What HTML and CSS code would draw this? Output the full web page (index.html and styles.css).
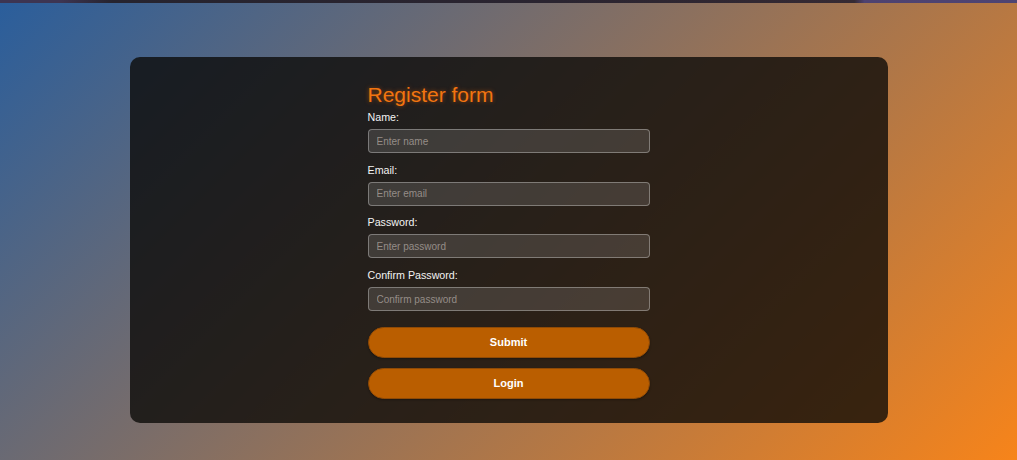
FILE: index.html
```html
<!DOCTYPE html>
<html lang="en">
<head>
<meta charset="utf-8">
<title>Register form</title>
<link rel="stylesheet" href="styles.css">
</head>
<body>
<div class="topbar"></div>
<main class="card">
  <form class="form">
    <h1 class="title">Register form</h1>
    <div class="field">
      <label class="label" for="name">Name:</label>
      <input class="input" id="name" type="text" placeholder="Enter name">
    </div>
    <div class="field">
      <label class="label" for="email">Email:</label>
      <input class="input" id="email" type="email" placeholder="Enter email">
    </div>
    <div class="field">
      <label class="label" for="pw">Password:</label>
      <input class="input" id="pw" type="password" placeholder="Enter password">
    </div>
    <div class="field">
      <label class="label" for="pw2">Confirm Password:</label>
      <input class="input" id="pw2" type="password" placeholder="Confirm password">
    </div>
    <div class="actions">
      <button class="btn btn-submit" type="button">Submit</button>
      <button class="btn btn-login" type="button">Login</button>
    </div>
  </form>
</main>
</body>
</html>
```
FILE: styles.css
```css
html, body {
  margin: 0;
  padding: 0;
}
body {
  min-height: 460px;
  height: 460px;
  overflow: hidden;
  font-family: "Liberation Sans", Arial, sans-serif;
  background: linear-gradient(135deg, #2a5e9c 0%, #f7841a 100%);
}
.topbar {
  height: 3px;
  background: linear-gradient(90deg, #3d3552 0%, #3d3552 6%, #26242f 11%, #2a2430 55%, #352a33 84%, #4e4270 85%, #4e4472 100%);
}
.card {
  width: 758px;
  height: 366px;
  box-sizing: border-box;
  margin: 54px auto 0;
  padding: 26px 0 0;
  border-radius: 10px;
  background: rgba(11, 10, 8, 0.79);
  display: flex;
  justify-content: center;
}
.form {
  width: 282px;
  display: flex;
  flex-direction: column;
}
.title {
  margin: 0 0 4px;
  font-size: 21px;
  line-height: 24px;
  font-weight: normal;
  color: #f27510;
  text-shadow: 0 0 4px rgba(255, 110, 0, 0.5);
}
.field {
  display: flex;
  flex-direction: column;
  gap: 5px;
  margin-bottom: 10.7px;
}
.label {
  font-size: 10.7px;
  line-height: 13px;
  color: #f2f2f2;
}
.input {
  box-sizing: border-box;
  height: 24px;
  margin: 0;
  padding: 0 8px;
  border: 1px solid rgba(255, 255, 255, 0.32);
  border-radius: 4px;
  background: rgba(255, 255, 255, 0.13);
  font-family: inherit;
  font-size: 10px;
  color: #ddd;
  outline: none;
}
.input::placeholder {
  color: #958d88;
}
.actions {
  display: flex;
  flex-direction: column;
  gap: 10px;
  margin-top: 5px;
}
.btn {
  height: 31px;
  border: 1px solid #8f4a06;
  border-radius: 16px;
  background: #ba5e00;
  color: #fff;
  font-family: inherit;
  font-size: 11px;
  font-weight: bold;
  padding: 0;
  box-shadow: 0 1px 2px rgba(0, 0, 0, 0.3);
}
```
